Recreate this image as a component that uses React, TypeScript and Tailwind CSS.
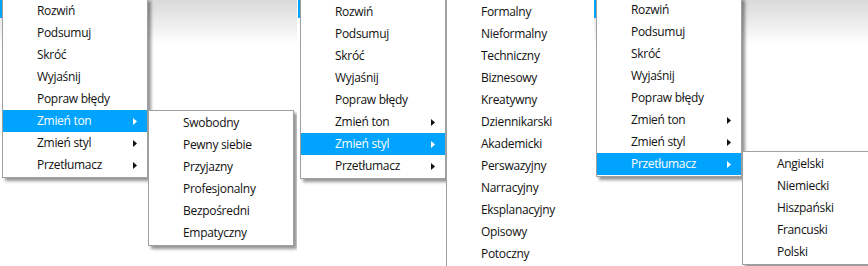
import React from "react";

type MenuItem = {
  label: string;
  sub?: boolean;
};

const mainItems: MenuItem[] = [
  { label: "Rozwiń" },
  { label: "Podsumuj" },
  { label: "Skróć" },
  { label: "Wyjaśnij" },
  { label: "Popraw błędy" },
  { label: "Zmień ton", sub: true },
  { label: "Zmień styl", sub: true },
  { label: "Przetłumacz", sub: true },
];

const tones = ["Swobodny", "Pewny siebie", "Przyjazny", "Profesjonalny", "Bezpośredni", "Empatyczny"];
const styles = [
  "Formalny",
  "Nieformalny",
  "Techniczny",
  "Biznesowy",
  "Kreatywny",
  "Dziennikarski",
  "Akademicki",
  "Perswazyjny",
  "Narracyjny",
  "Eksplanacyjny",
  "Opisowy",
  "Potoczny",
];
const languages = ["Angielski", "Niemiecki", "Hiszpański", "Francuski", "Polski"];

const Arrow = ({ white }: { white: boolean }) => (
  <svg width="4" height="7" viewBox="0 0 4 7" className="shrink-0">
    <polygon points="0,0 4,3.5 0,7" fill={white ? "#ffffff" : "#111111"} />
  </svg>
);

const Menu = ({ active, className }: { active: number; className: string }) => (
  <div
    className={`w-[146px] shrink-0 border border-[#a0a0a0] bg-white py-px shadow-[3px_3px_3px_rgba(0,0,0,0.42)] ${className}`}
  >
    {mainItems.map((item, idx) => (
      <div
        key={item.label}
        className={`flex h-[22px] items-center justify-between pl-[34px] pr-[10px] ${
          idx === active ? "bg-[#00a4ff] text-white" : "text-[#111111]"
        }`}
      >
        <span>{item.label}</span>
        {item.sub && <Arrow white={idx === active} />}
      </div>
    ))}
  </div>
);

const SubMenu = ({ items, className }: { items: string[]; className: string }) => (
  <div
    className={`shrink-0 border border-[#a0a0a0] bg-white py-px text-[#111111] shadow-[3px_3px_3px_rgba(0,0,0,0.42)] ${className}`}
  >
    {items.map((label) => (
      <div key={label} className="flex h-[22px] items-center pl-[34px]">
        {label}
      </div>
    ))}
  </div>
);

const Caret = () => <div className="h-[18px] w-[2px] shrink-0 bg-[#00a4ff]" />;

export default function App() {
  return (
    <div className="flex h-[266px] w-[868px] overflow-hidden bg-white font-['Open_Sans',sans-serif] text-[12px] leading-none tracking-[-0.3px]">
      <div className="flex h-[266px] w-[297px] shrink-0 items-start overflow-hidden bg-[linear-gradient(#d9d9d9,#ffffff_45px)]">
        <Caret />
        <Menu active={5} className="-mt-[2px]" />
        <SubMenu items={tones} className="mt-[110px] w-[146px]" />
      </div>
      <div className="flex h-[266px] w-[297px] shrink-0 items-start overflow-hidden bg-white pl-px">
        <Caret />
        <Menu active={6} className="-mt-[1px]" />
        <SubMenu items={styles} className="-mt-[1px] w-[170px]" />
      </div>
      <div className="flex h-[266px] flex-1 items-start overflow-hidden bg-[linear-gradient(#d9d9d9,#ffffff_45px)]">
        <Caret />
        <Menu active={7} className="-mt-[3px]" />
        <SubMenu items={languages} className="mt-[151px] w-[160px]" />
      </div>
    </div>
  );
}
